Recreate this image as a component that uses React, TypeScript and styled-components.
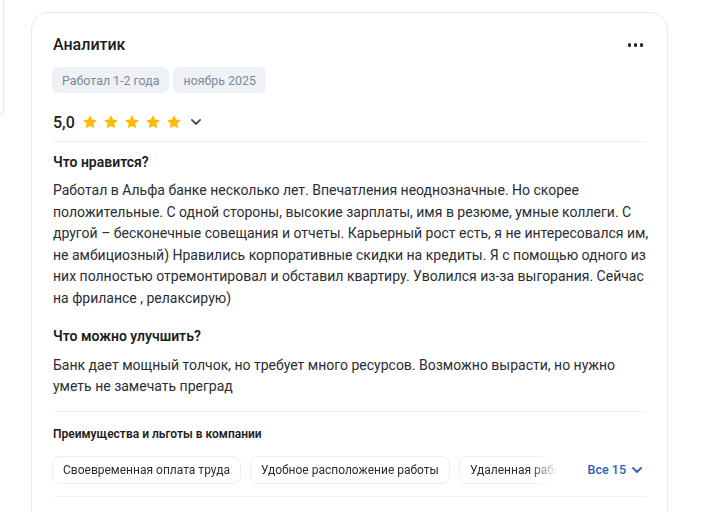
import React from "react";
import styled, { createGlobalStyle } from "styled-components";

const Global = createGlobalStyle`
  html, body { margin: 0; padding: 0; background: #ffffff; }
  body { font-family: Roboto, "Noto Sans", Arial, sans-serif; color: #1f2228; }
  * { box-sizing: border-box; }
`;

const Page = styled.div`
  display: flex;
  align-items: flex-start;
  gap: 27px;
  padding-top: 12px;
  width: 712px;
  height: 512px;
  overflow: hidden;
`;

const SideEdge = styled.div`
  width: 4px;
  height: 115px;
  margin-top: -12px;
  border-right: 1px solid #e6e8ee;
  border-bottom: 1px solid #e6e8ee;
  border-bottom-right-radius: 10px;
  flex: none;
`;

const Card = styled.article`
  width: 637px;
  flex: none;
  border: 1px solid #e8eaf0;
  border-radius: 18px;
  padding: 22px 17px 40px 21px;
  min-height: 560px;
`;

const Header = styled.div`
  display: flex;
  align-items: center;
  justify-content: space-between;
  height: 20px;
`;

const Title = styled.h2`
  margin: 0;
  font-size: 16px;
  line-height: 20px;
  font-weight: 500;
  color: #1b1d22;
`;

const MoreButton = styled.button`
  border: none;
  background: none;
  padding: 0;
  margin-right: 7px;
  display: flex;
  gap: 2.5px;
  cursor: pointer;
`;

const Dot = styled.span`
  width: 3.5px;
  height: 3.5px;
  border-radius: 50%;
  background: #1f2228;
`;

const Tags = styled.div`
  display: flex;
  gap: 4px;
  margin-top: 12px;
  margin-left: -1px;
`;

const Tag = styled.span`
  display: inline-flex;
  align-items: center;
  height: 26px;
  padding: 0 10px;
  border-radius: 6px;
  background: #eef1f6;
  color: #7f8897;
  font-size: 12.4px;
`;

const RatingRow = styled.div`
  display: flex;
  align-items: center;
  height: 24px;
  margin-top: 17px;
`;

const RatingValue = styled.span`
  font-size: 16px;
  font-weight: 500;
  color: #1b1d22;
  margin-right: 7px;
`;

const Stars = styled.div`
  display: flex;
  gap: 5px;
  margin-right: 7px;
`;

const Separator = styled.hr<{ $top: number }>`
  border: none;
  border-top: 1px solid #f0f1f4;
  margin: ${(p) => p.$top}px 3px 0 0;
`;

const SectionTitle = styled.h3<{ $top: number; $small?: boolean }>`
  margin: ${(p) => p.$top}px 0 0;
  font-size: ${(p) => (p.$small ? 12 : 14)}px;
  line-height: ${(p) => (p.$small ? 18 : 20)}px;
  font-weight: 600;
  color: #1b1d22;
`;

const Paragraph = styled.p<{ $top: number }>`
  margin: ${(p) => p.$top}px 0 0;
  font-size: 14px;
  line-height: 21.6px;
  color: #2a2d33;
`;

const BenefitsRow = styled.div`
  display: flex;
  align-items: center;
  margin-top: 13px;
  margin-left: -1px;
  margin-right: 3px;
`;

const ChipStrip = styled.div`
  flex: 1;
  display: flex;
  gap: 9px;
  overflow: hidden;
  -webkit-mask-image: linear-gradient(to right, #000 0, #000 478px, transparent 506px);
  mask-image: linear-gradient(to right, #000 0, #000 478px, transparent 506px);
`;

const Chip = styled.span`
  flex: none;
  display: inline-flex;
  align-items: center;
  height: 28px;
  padding: 0 10px;
  border: 1px solid #eceef2;
  border-radius: 8px;
  font-size: 12px;
  color: #2a2d33;
  white-space: nowrap;
`;

const ShowAll = styled.button`
  flex: none;
  display: inline-flex;
  align-items: center;
  gap: 4px;
  border: none;
  background: none;
  padding: 0;
  margin-left: 25px;
  margin-right: 3px;
  font-family: inherit;
  font-size: 12.5px;
  font-weight: 500;
  color: #2d5fb5;
  cursor: pointer;
`;

const Star = () => (
  <svg width="16" height="16" viewBox="0 0 24 24">
    <path
      d="M12 1.6l3.1 6.7 7.3.9-5.4 5 1.4 7.2L12 17.9l-6.4 3.5 1.4-7.2-5.4-5 7.3-.9z"
      fill="#fcbc05"
    />
  </svg>
);

const Chevron = ({ color, size }: { color: string; size: number }) => (
  <svg width={size} height={size} viewBox="0 0 12 12">
    <path d="M2.5 4.2L6 7.7l3.5-3.5" fill="none" stroke={color} strokeWidth="1.6" strokeLinecap="round" strokeLinejoin="round" />
  </svg>
);

export default function App() {
  return (
    <>
      <Global />
      <Page>
        <SideEdge />
        <Card>
          <Header>
            <Title>Аналитик</Title>
            <MoreButton aria-label="Ещё">
              <Dot />
              <Dot />
              <Dot />
            </MoreButton>
          </Header>
          <Tags>
            <Tag>Работал 1-2 года</Tag>
            <Tag>ноябрь 2025</Tag>
          </Tags>
          <RatingRow>
            <RatingValue>5,0</RatingValue>
            <Stars>
              {[0, 1, 2, 3, 4].map((i) => (
                <Star key={i} />
              ))}
            </Stars>
            <Chevron color="#4a4e57" size={14} />
          </RatingRow>
          <Separator $top={7} />
          <SectionTitle $top={10}>Что нравится?</SectionTitle>
          <Paragraph $top={8}>
            Работал в Альфа банке несколько лет. Впечатления неоднозначные. Но скорее положительные. С одной
            стороны, высокие зарплаты, имя в резюме, умные коллеги. С другой – бесконечные совещания и отчеты.
            Карьерный рост есть, я не интересовался им, не амбициозный) Нравились корпоративные скидки на кредиты.
            Я с помощью одного из них полностью отремонтировал и обставил квартиру. Уволился из-за выгорания.
            Сейчас на фрилансе , релаксирую)
          </Paragraph>
          <SectionTitle $top={16}>Что можно улучшить?</SectionTitle>
          <Paragraph $top={9}>
            Банк дает мощный толчок, но требует много ресурсов. Возможно вырасти, но нужно уметь не замечать
            преград
          </Paragraph>
          <Separator $top={13} />
          <SectionTitle $top={13} $small>
            Преимущества и льготы в компании
          </SectionTitle>
          <BenefitsRow>
            <ChipStrip>
              <Chip>Своевременная оплата труда</Chip>
              <Chip>Удобное расположение работы</Chip>
              <Chip>Удаленная работа</Chip>
            </ChipStrip>
            <ShowAll>
              Все 15
              <Chevron color="#2d5fb5" size={14} />
            </ShowAll>
          </BenefitsRow>
          <Separator $top={12} />
        </Card>
      </Page>
    </>
  );
}
